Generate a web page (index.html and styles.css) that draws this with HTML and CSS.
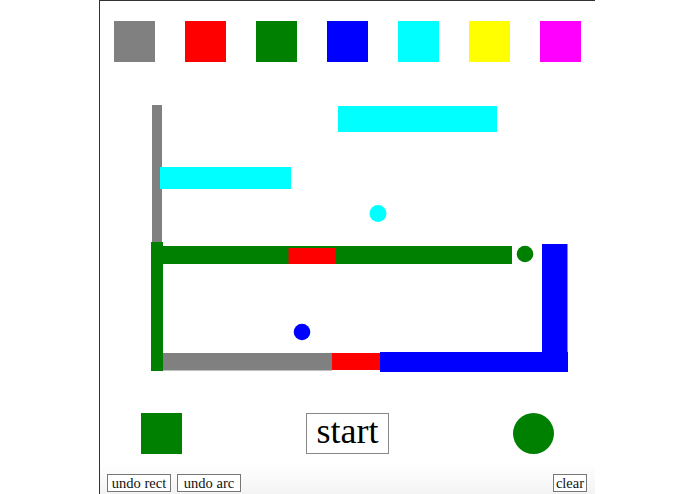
FILE: index.html
```html
<!DOCTYPE html>
<html>

<head>
    <link rel="stylesheet" href="styles.css">
</head>

<body>
    <div class="board">
        <div class="palette">
            <div class="swatch gray"></div>
            <div class="swatch red"></div>
            <div class="swatch green"></div>
            <div class="swatch blue"></div>
            <div class="swatch cyan"></div>
            <div class="swatch yellow"></div>
            <div class="swatch magenta"></div>
        </div>

        <svg class="canvas" width="495" height="320" viewBox="0 0 495 320">
            <rect x="52" y="25" width="10" height="142" fill="#808080"/>
            <rect x="60" y="87" width="131" height="22" fill="#00ffff"/>
            <rect x="238" y="26" width="159" height="26" fill="#00ffff"/>
            <circle cx="278" cy="133.5" r="8.5" fill="#00ffff"/>

            <rect x="51" y="162" width="12" height="129" fill="#008000"/>
            <rect x="51" y="166" width="237" height="18" fill="#008000"/>
            <rect x="188.5" y="168" width="46.5" height="16" fill="#ff0000"/>
            <rect x="235" y="166" width="177" height="18" fill="#008000"/>
            <circle cx="425" cy="174" r="8.3" fill="#008000"/>

            <rect x="442" y="164" width="25.5" height="108" fill="#0000ff"/>
            <rect x="280" y="272" width="188" height="20" fill="#0000ff"/>
            <rect x="232" y="273" width="48" height="17" fill="#ff0000"/>
            <rect x="63" y="273" width="169" height="17.5" fill="#808080"/>
            <circle cx="202" cy="252" r="8.3" fill="#0000ff"/>
        </svg>

        <div class="tools">
            <div class="tool-rect"></div>
            <button class="start">start</button>
            <div class="tool-arc"></div>
        </div>

        <div class="actions">
            <button class="small undo">undo rect</button>
            <button class="small undo">undo arc</button>
            <button class="small clear">clear</button>
        </div>
    </div>
</body>

</html>
```

FILE: styles.css
```css
html, body {
    margin: 0;
    height: 100%;
    overflow: hidden;
    background: #ffffff;
    font-family: "Liberation Serif", serif;
}

.board {
    width: 495px;
    height: 100%;
    margin-left: 99px;
    border-left: 1px solid #333;
    border-top: 1px solid #333;
    display: flex;
    flex-direction: column;
}

.palette {
    display: flex;
    gap: 30px;
    padding: 20px 0 0 14px;
}

.swatch {
    width: 41px;
    height: 41px;
}

.gray { background: #808080; }
.red { background: #ff0000; }
.green { background: #008000; }
.blue { background: #0000ff; }
.cyan { background: #00ffff; }
.yellow { background: #ffff00; }
.magenta { background: #ff00ff; }

.canvas {
    display: block;
    margin-top: 18px;
}

.tools {
    display: flex;
    justify-content: space-between;
    align-items: center;
    padding: 0 41px;
    margin-top: 13px;
    height: 41px;
}

.tool-rect {
    width: 41px;
    height: 41px;
    background: #008000;
}

.tool-arc {
    width: 41px;
    height: 41px;
    border-radius: 50%;
    background: #008000;
}

.start {
    width: 83px;
    height: 41px;
    padding: 0 0 4px;
    border: 1px solid #888;
    background: #fff;
    color: #000;
    font-family: "Liberation Serif", serif;
    font-size: 36px;
    line-height: 33px;
}

.actions {
    display: flex;
    gap: 6px;
    padding: 20px 8px 0 7px;
    flex: 1;
    background: linear-gradient(to bottom, #ffffff 0, #ffffff 10px, #f3f3f3 100%);
}

.small {
    height: 18px;
    padding: 0;
    border: 1px solid #777;
    background: #fff;
    color: #111;
    font-family: "Liberation Serif", serif;
    font-size: 14.5px;
    line-height: 15px;
    text-align: center;
}

.undo {
    width: 64px;
}

.clear {
    width: 34px;
    margin-left: auto;
}
```
